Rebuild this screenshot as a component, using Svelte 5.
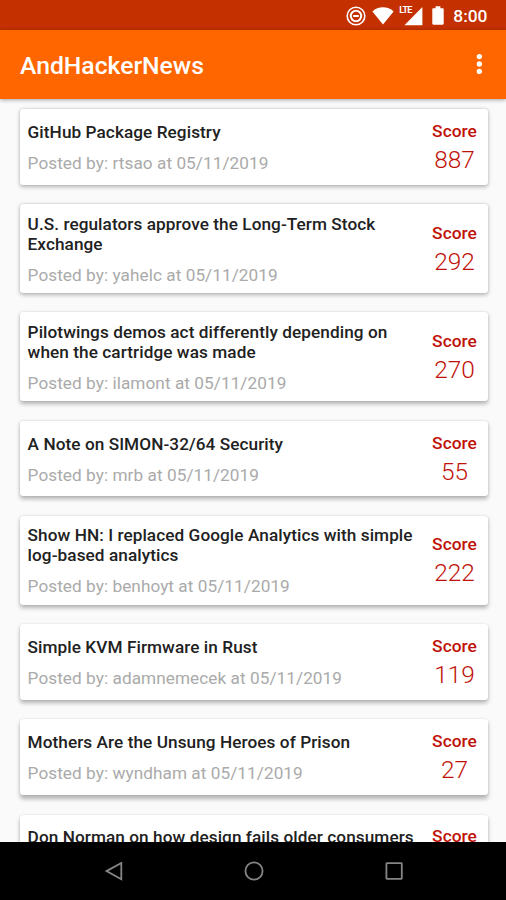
<script>
  const stories = [
    { lines: ['GitHub Package Registry'], by: 'rtsao', score: 887 },
    { lines: ['U.S. regulators approve the Long-Term Stock', 'Exchange'], by: 'yahelc', score: 292 },
    { lines: ['Pilotwings demos act differently depending on', 'when the cartridge was made'], by: 'ilamont', score: 270 },
    { lines: ['A Note on SIMON-32/64 Security'], by: 'mrb', score: 55 },
    { lines: ['Show HN: I replaced Google Analytics with simple', 'log-based analytics'], by: 'benhoyt', score: 222 },
    { lines: ['Simple KVM Firmware in Rust'], by: 'adamnemecek', score: 119 },
    { lines: ['Mothers Are the Unsung Heroes of Prison'], by: 'wyndham', score: 27 },
    { lines: ['Don Norman on how design fails older consumers'] }
  ];

  // Key-light shadow lengthens for cards further down the screen.
  const shadowY = (i) => 1.5 + i * 0.3;
</script>

<div class="screen">
  <header class="status">
    <svg class="dnd" width="20" height="20" viewBox="0 0 20 20" fill="none" stroke="#fff">
      <circle cx="10" cy="10" r="8.8" stroke-width="1.6" />
      <circle cx="10" cy="10" r="5.2" stroke-width="2" />
      <path d="M7.2 10h5.6" stroke-width="2" />
    </svg>
    <svg class="wifi" width="22" height="18" viewBox="0 0 22 18" fill="#fff">
      <path d="M11 17.6 0.4 4.4C3.3 1.7 7 0.3 11 0.3s7.7 1.4 10.6 4.1z" />
    </svg>
    <div class="cell">
      <svg width="24" height="20" viewBox="0 0 24 20" fill="#fff"><path d="M23.4 1v18.2H5.4z" /></svg>
      <span>LTE</span>
    </div>
    <svg class="battery" width="12" height="19" viewBox="0 0 12 19" fill="#fff">
      <path d="M3.6 0.3h4.8v2h2.2c.7 0 1.1.4 1.1 1.1v14.2c0 .7-.4 1.1-1.1 1.1H1.4c-.7 0-1.1-.4-1.1-1.1V3.4c0-.7.4-1.1 1.1-1.1h2.2z" />
    </svg>
    <time>8:00</time>
  </header>

  <div class="appbar">
    <h1>AndHackerNews</h1>
    <svg width="6" height="22" viewBox="0 0 6 22" fill="#fff">
      <circle cx="3.4" cy="3.6" r="2.7" />
      <circle cx="3.4" cy="11" r="2.7" />
      <circle cx="3.4" cy="18.4" r="2.7" />
    </svg>
  </div>

  <main>
    {#each stories as story, i}
      <article class:tall={story.lines.length > 1} style="--shadow-y: {shadowY(i)}px">
        <div class="info">
          <h2>{#each story.lines as line}<span>{line}</span>{/each}</h2>
          <p>{#if story.by}Posted by: {story.by} at 05/11/2019{/if}</p>
        </div>
        <div class="score">
          <b>Score</b>
          <span>{story.score ?? ''}</span>
        </div>
      </article>
    {/each}
  </main>

  <nav>
    <svg width="20" height="20" viewBox="0 0 20 20"><path d="M17.3 2v16.2L2.5 10.1z" /></svg>
    <svg width="20" height="20" viewBox="0 0 20 20"><circle cx="10" cy="10" r="8.6" /></svg>
    <svg width="20" height="20" viewBox="0 0 20 20"><rect x="2.4" y="2.2" width="15.4" height="15.6" rx=".5" /></svg>
  </nav>
</div>

<style>
  .screen {
    width: 506px;
    height: 900px;
    display: flex;
    flex-direction: column;
    overflow: hidden;
    background: #fafafa;
    font-family: Roboto, "Liberation Sans", sans-serif;
  }
  .status {
    flex: none;
    height: 30px;
    box-sizing: border-box;
    padding: 1px 18.5px 0 0;
    display: flex;
    align-items: center;
    justify-content: flex-end;
    background: #c43000;
    color: #fff;
  }
  .wifi { margin-left: 6px; }
  .cell { position: relative; width: 24px; height: 20px; margin-left: 5px; }
  .cell span {
    position: absolute;
    left: 0;
    top: 0;
    font-size: 9px;
    line-height: 9px;
    font-weight: 700;
    letter-spacing: -0.7px;
    padding-right: 1px;
    background: #c43000;
  }
  .battery { margin-left: 9px; }
  time { margin-left: 9px; font-size: 17.4px; font-weight: 500; }
  .appbar {
    flex: none;
    height: 69px;
    box-sizing: border-box;
    padding: 1px 24px 0 20px;
    display: flex;
    align-items: center;
    justify-content: space-between;
    background: #ff6600;
    color: #fff;
    box-shadow: 0 1px 4px rgba(0, 0, 0, 0.35);
    z-index: 1;
  }
  .appbar svg { margin-bottom: 2px; }
  h1 { margin: 1px 0 0; font-size: 24.7px; line-height: 30px; font-weight: 500; }
  main {
    flex: 1;
    min-height: 0;
    overflow: hidden;
    padding: 10px 18px 0 20px;
    display: flex;
    flex-direction: column;
    gap: 19.5px;
  }
  article {
    flex: none;
    height: 75.7px;
    box-sizing: border-box;
    padding: 1px 10.5px 0 7.6px;
    display: flex;
    align-items: center;
    justify-content: space-between;
    border-radius: 3px;
    background: #fff;
    box-shadow: 0 var(--shadow-y) 4px rgba(0, 0, 0, 0.28), 0 0 2px rgba(0, 0, 0, 0.12);
  }
  article.tall { height: 88.8px; }
  h2 { margin: 0; font-size: 17.2px; line-height: 20px; font-weight: 500; letter-spacing: 0.07px; color: #212121; }
  h2 span { display: block; white-space: nowrap; }
  p { min-height: 20px; margin: 11px 0 0; font-size: 17.2px; line-height: 20px; letter-spacing: 0.06px; color: #aaa; white-space: nowrap; }
  .score {
    width: 46px;
    display: flex;
    flex-direction: column;
    align-items: center;
    color: #bf1208;
  }
  .score b { font-size: 17.4px; line-height: 20px; font-weight: 500; }
  .score span { min-height: 29px; margin-top: 4px; font-size: 24.4px; line-height: 29px; font-weight: 300; }
  nav {
    flex: none;
    height: 58px;
    box-sizing: border-box;
    padding-left: 1px;
    display: flex;
    align-items: center;
    justify-content: center;
    gap: 120px;
    background: #000;
  }
  nav svg { fill: none; stroke: #858585; stroke-width: 1.8; }
</style>
